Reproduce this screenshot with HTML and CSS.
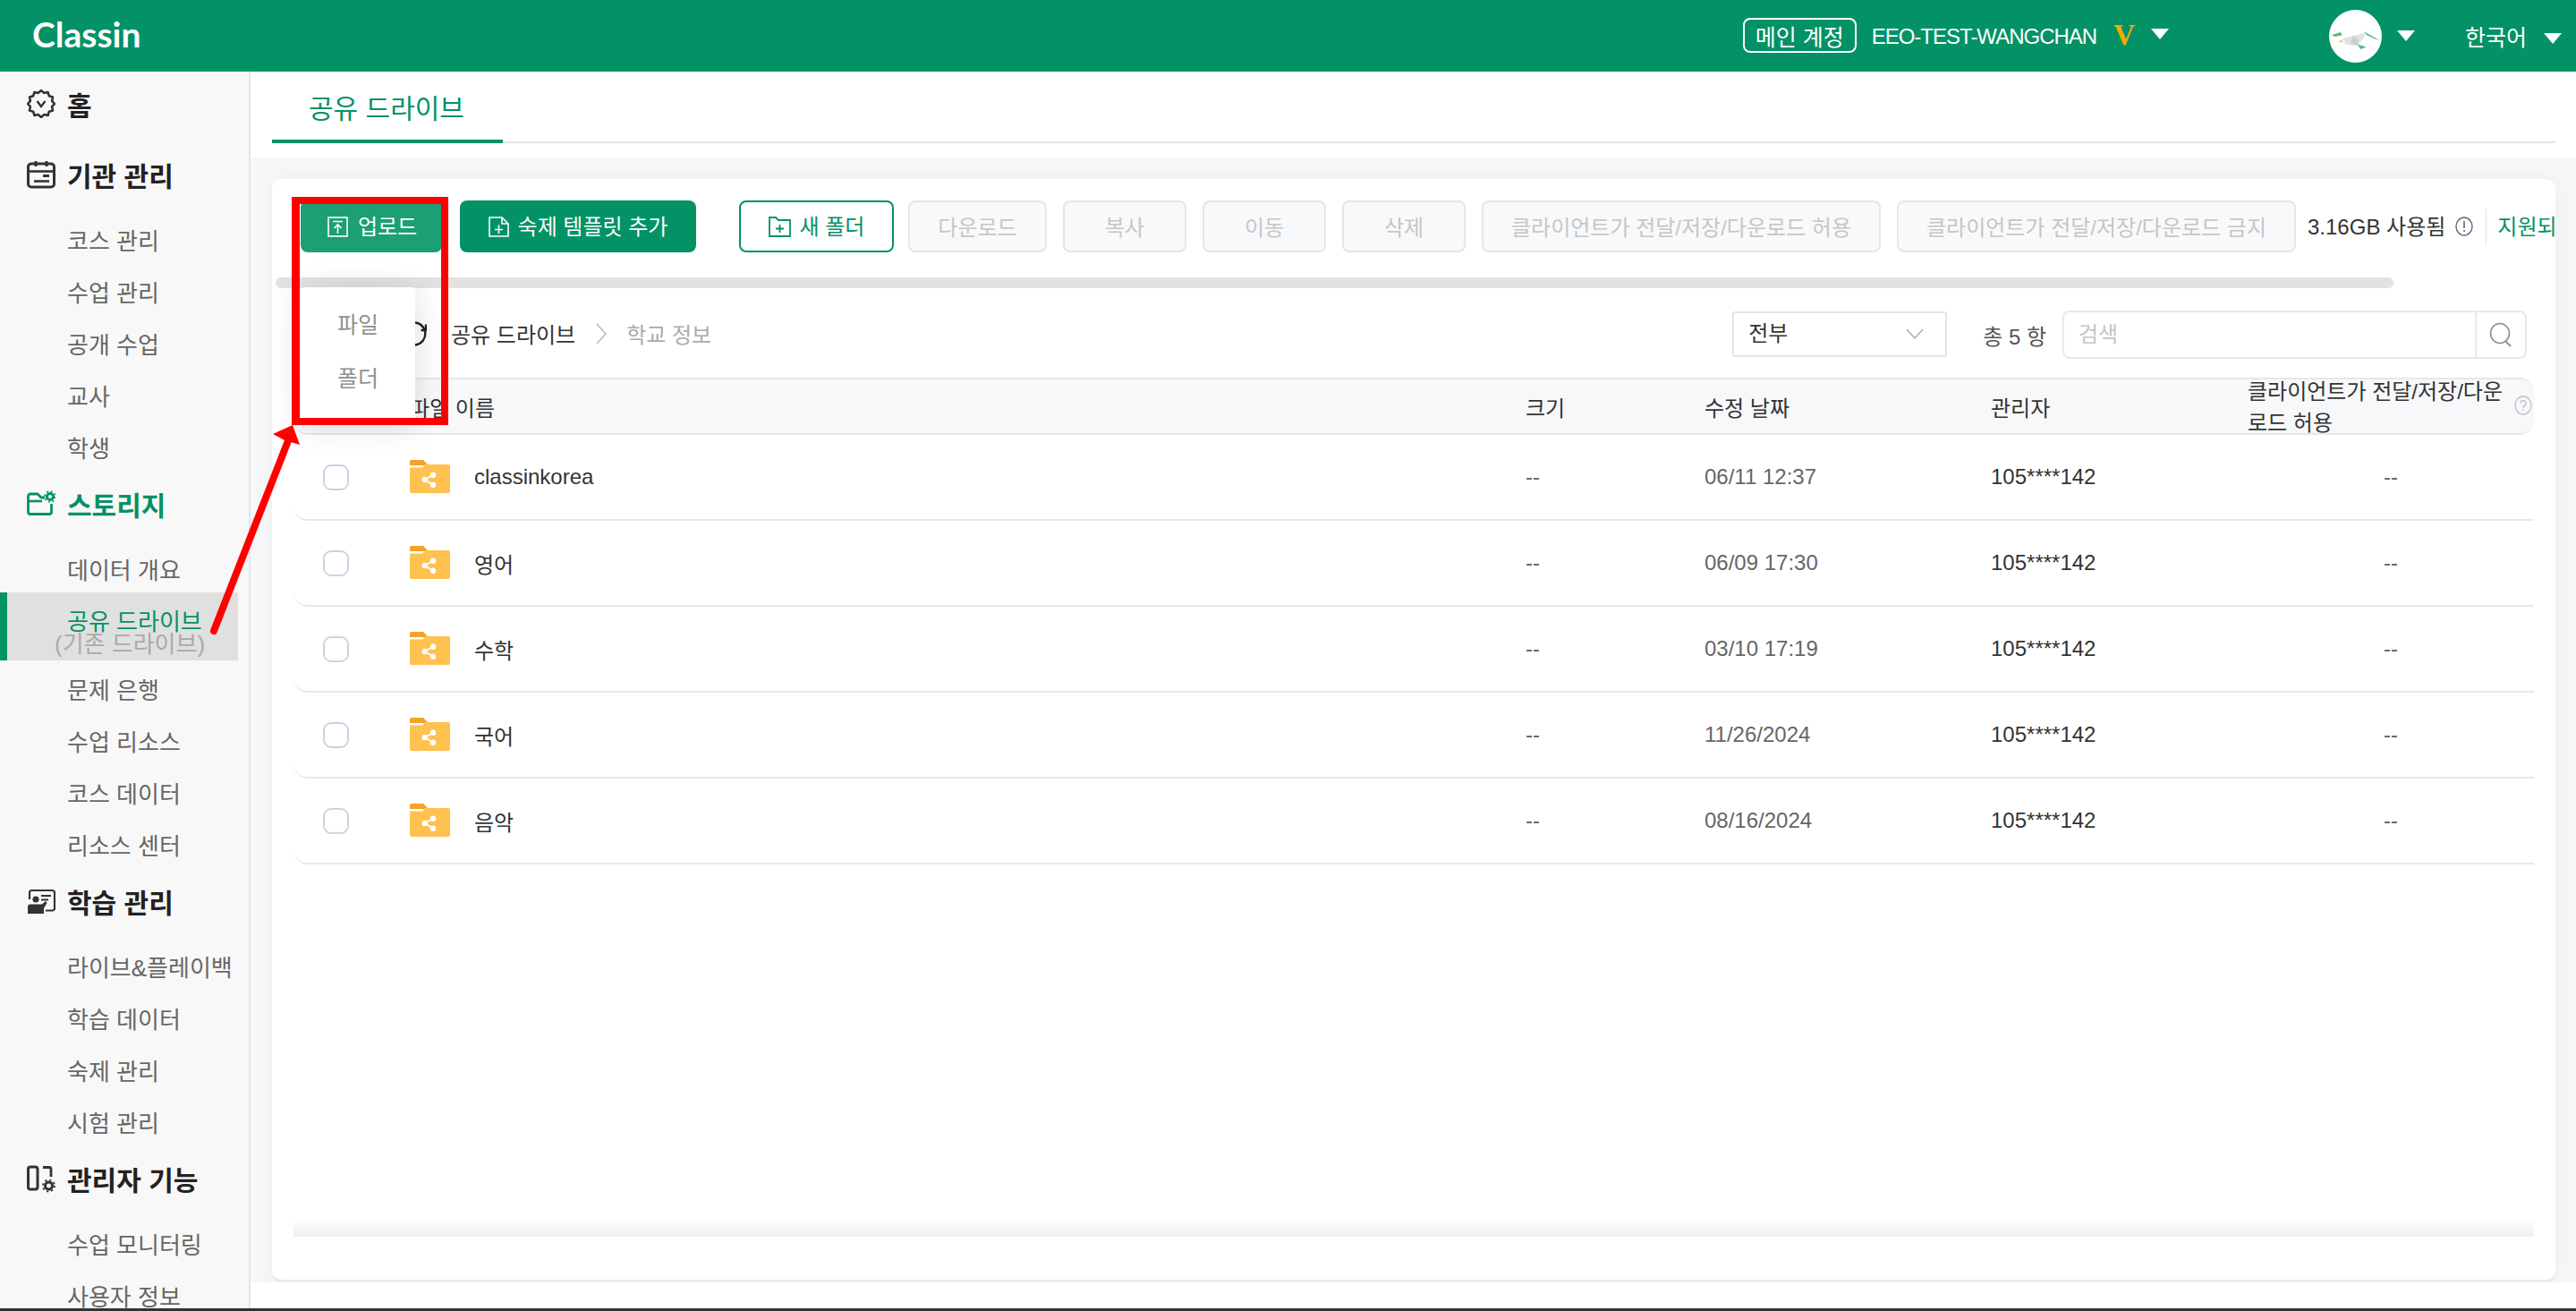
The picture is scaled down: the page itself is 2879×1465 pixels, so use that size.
FILE: index.html
```html
<!DOCTYPE html>
<html lang="ko">
<head>
<meta charset="utf-8">
<title>ClassIn</title>
<link rel="stylesheet" href="styles.css">
</head>
<body>
<div class="page">
  <header class="topbar">
    <div class="logo">Classin</div>
    <div class="badge">메인 계정</div>
    <div class="acct">EEO-TEST-WANGCHAN</div>
    <div class="vip">V</div>
    <i class="tri tri-a"></i>
    <svg class="avatar" viewBox="0 0 59 59">
      <circle cx="29.5" cy="29.5" r="29.5" fill="#fff"/>
      <path d="M15 32 L27 29 L40 25.5 L39 32 L31 40 L20 39 Z" fill="#dfe3e1"/>
      <path d="M27 29 L33 34 L31 40 L24 37 Z" fill="#c9cfcc"/>
      <path d="M15 32 L20 39 L13 36 Z" fill="#eef0ee"/>
      <path d="M2.7 28 L12.7 25 L15 28.3 L6.7 30 Z" fill="#5dbb7d"/>
      <path d="M39.3 24.3 L56.7 34.3 L50 32 L41.7 28 Z" fill="#5dbb7d"/>
      <path d="M31.7 38.3 L41.7 41.7 L35 44 Z" fill="#5dbb7d"/>
      <circle cx="13" cy="35" r="1.3" fill="#f2b33d"/>
    </svg>
    <i class="tri tri-b"></i>
    <div class="lang">한국어</div>
    <i class="tri tri-c"></i>
  </header>

  <div class="middle">
    <nav class="sidebar">
      <div class="nav-head nav-home">
        <svg class="nav-icon" viewBox="0 0 32 32"><path d="M31 16 28.1 19.2 29 23.5 24.8 24.8 23.5 29 19.2 28.1 16 31 12.8 28.1 8.5 29 7.2 24.8 3 23.5 3.9 19.2 1 16 3.9 12.8 3 8.5 7.2 7.2 8.5 3 12.8 3.9 16 1 19.2 3.9 23.5 3 24.8 7.2 29 8.5 28.1 12.8Z" fill="none" stroke="#333" stroke-width="2.6" stroke-linejoin="round"/><path d="M11.5 13 16 19 20.5 13" fill="none" stroke="#333" stroke-width="2.4"/></svg>
        <span>홈</span>
      </div>

      <div class="nav-head">
        <svg class="nav-icon" viewBox="0 0 32 32"><rect x="1.5" y="4" width="29" height="26" rx="3.5" fill="none" stroke="#333" stroke-width="3"/><path d="M10 1V7M22 1V7" stroke="#333" stroke-width="3"/><path d="M2 12.5H30" stroke="#333" stroke-width="2.6"/><path d="M18 17.5H25" stroke="#333" stroke-width="3"/><path d="M8 23.5H25" stroke="#333" stroke-width="2.6"/></svg>
        <span>기관 관리</span>
      </div>
      <a class="nav-item">코스 관리</a>
      <a class="nav-item">수업 관리</a>
      <a class="nav-item">공개 수업</a>
      <a class="nav-item">교사</a>
      <a class="nav-item">학생</a>

      <div class="nav-head nav-head-on">
        <svg class="nav-icon" viewBox="0 0 32 32"><path d="M20 9 H16 L12 5 H4 A2.5 2.5 0 0 0 1.5 7.5 V25 A2.5 2.5 0 0 0 4 27.5 H25 A2.5 2.5 0 0 0 27.5 25 V16" fill="none" stroke="#029266" stroke-width="2.8" stroke-linejoin="round"/><path d="M2 13 H17" stroke="#029266" stroke-width="2.6"/><circle cx="26" cy="8" r="3.6" fill="none" stroke="#029266" stroke-width="3"/><circle cx="26" cy="8" r="6" fill="none" stroke="#029266" stroke-width="1.6" stroke-dasharray="2 2.7"/></svg>
        <span>스토리지</span>
      </div>
      <a class="nav-item">데이터 개요</a>
      <a class="nav-item nav-item-on">
        <span class="on-main">공유 드라이브</span>
        <span class="on-sub">(기존 드라이브)</span>
      </a>
      <a class="nav-item">문제 은행</a>
      <a class="nav-item">수업 리소스</a>
      <a class="nav-item">코스 데이터</a>
      <a class="nav-item">리소스 센터</a>

      <div class="nav-head">
        <svg class="nav-icon" viewBox="0 0 32 32"><path d="M3 14V6.5A2.5 2.5 0 0 1 5.500 4H28.500A2.500 2.500 0 0 1 31 6.500V24A2.500 2.500 0 0 1 28.500 26.500H21" fill="none" stroke="#333" stroke-width="2.200"/><circle cx="10" cy="14" r="3.600" fill="#333"/><path d="M1 30V22.500A3 3 0 0 1 4 19.500H17L21 16 22.500 18 19 24V30Z" fill="#333"/><path d="M16 10H27M16 14.500H24" stroke="#333" stroke-width="2"/></svg>
        <span>학습 관리</span>
      </div>
      <a class="nav-item">라이브&amp;플레이백</a>
      <a class="nav-item">학습 데이터</a>
      <a class="nav-item">숙제 관리</a>
      <a class="nav-item">시험 관리</a>

      <div class="nav-head">
        <svg class="nav-icon" viewBox="0 0 32 32"><rect x="1.500" y="3" width="10.500" height="25" rx="2.500" fill="none" stroke="#333" stroke-width="3"/><path d="M18 3.500H25A2 2 0 0 1 27 5.500V14" fill="none" stroke="#333" stroke-width="2.800"/><circle cx="24.500" cy="24" r="4" fill="none" stroke="#333" stroke-width="3"/><circle cx="24.500" cy="24" r="6.500" fill="none" stroke="#333" stroke-width="1.800" stroke-dasharray="2.200 2.900"/></svg>
        <span>관리자 기능</span>
      </div>
      <a class="nav-item">수업 모니터링</a>
      <a class="nav-item">사용자 정보</a>
    </nav>

    <main class="main">
      <div class="tabstrip">
        <div class="tabs"><div class="tab">공유 드라이브</div></div>
      </div>
      <div class="content">
        <section class="card">
          <div class="toolbar">
            <button class="btn btn-upload">
              <svg class="btn-icon" viewBox="0 0 23 23"><rect x="1" y="1" width="21" height="21" fill="none" stroke="#fff" stroke-width="1.600"/><path d="M6 5.500H17M11.500 19V9M7.500 13 11.500 9 15.500 13" fill="none" stroke="#fff" stroke-width="1.600"/></svg>
              업로드
            </button>
            <button class="btn btn-solid">
              <svg class="btn-icon" viewBox="0 0 23 23"><path d="M1 1H15L22 8V22H1Z M15 1V8H22" fill="none" stroke="#fff" stroke-width="1.600"/><path d="M11.500 9.500V19M7 14.500H16" stroke="#fff" stroke-width="1.600"/></svg>
              숙제 템플릿 추가
            </button>
            <button class="btn btn-line">
              <svg class="btn-icon" viewBox="0 0 25 23"><path d="M1 1H8L11 4H24V22H1Z" fill="none" stroke="#029266" stroke-width="1.800"/><path d="M12.500 9V18M8 13.500H17" stroke="#029266" stroke-width="1.800"/></svg>
              새 폴더
            </button>
            <button class="btn btn-off w-down">다운로드</button>
            <button class="btn btn-off w-small">복사</button>
            <button class="btn btn-off w-small">이동</button>
            <button class="btn btn-off w-small">삭제</button>
            <button class="btn btn-off w-wide">클라이언트가 전달/저장/다운로드 허용</button>
            <button class="btn btn-off w-wide">클라이언트가 전달/저장/다운로드 금지</button>
            <span class="usage">3.16GB 사용됨</span>
            <svg class="info" viewBox="0 0 20 22"><ellipse cx="10" cy="11" rx="9" ry="10" fill="none" stroke="#5f6b7c" stroke-width="1.400"/><path d="M10 5V13M10 15V17" stroke="#5f6b7c" stroke-width="1.600"/></svg>
            <span class="sep"></span>
            <span class="support">지원되</span>
          </div>
          <div class="hscroll"></div>

          <div class="crumbs">
            <svg class="refresh" viewBox="0 0 28 28"><path d="M15 1.500A12.500 12.500 0 1 1 2 18" fill="none" stroke="#222" stroke-width="2.400"/><path d="M27 3.500V10H21.500" fill="none" stroke="#222" stroke-width="2.400"/></svg>
            <span class="crumb">공유 드라이브</span>
            <svg class="crumb-sep" viewBox="0 0 12 24"><path d="M1 1 11 12 1 23" fill="none" stroke="#b5b5b5" stroke-width="1.400"/></svg>
            <span class="crumb crumb-last">학교 정보</span>
            <div class="select">
              <span>전부</span>
              <svg class="select-arrow" viewBox="0 0 20 12"><path d="M1 1 10 11 19 1" fill="none" stroke="#a8a8a8" stroke-width="1.400"/></svg>
            </div>
            <span class="total">총 5 항</span>
            <div class="search">
              <input class="search-input" placeholder="검색">
              <span class="search-btn">
                <svg class="search-icon" viewBox="0 0 26 28"><ellipse cx="12" cy="12.500" rx="10.500" ry="11" fill="none" stroke="#8c8c8c" stroke-width="1.600"/><path d="M18 21 24 27" stroke="#8c8c8c" stroke-width="1.800"/></svg>
              </span>
            </div>
          </div>

          <div class="table">
            <div class="grid thead">
              <span></span>
              <span>파일 이름</span>
              <span>크기</span>
              <span>수정 날짜</span>
              <span>관리자</span>
              <span class="th-perm">
                <span class="th-perm-text">클라이언트가 전달/저장/다운로드 허용</span>
                <svg class="help" viewBox="0 0 20 22"><ellipse cx="10" cy="11" rx="9" ry="10" fill="none" stroke="#bfc3c9" stroke-width="1.400"/><path d="M7 8.500A3 3 0 1 1 11 11.500C10.300 12 10 12.500 10 14M10 15.500V17" fill="none" stroke="#bfc3c9" stroke-width="1.400"/></svg>
              </span>
            </div>

            <div class="grid row">
              <span class="check"></span>
              <span class="name"><svg class="folder" viewBox="0 0 45 37"><use href="#shared-folder"/></svg>classinkorea</span>
              <span class="dim">--</span><span class="dim">06/11 12:37</span><span>105****142</span><span class="dim perm">--</span>
            </div>
            <div class="grid row">
              <span class="check"></span>
              <span class="name"><svg class="folder" viewBox="0 0 45 37"><use href="#shared-folder"/></svg>영어</span>
              <span class="dim">--</span><span class="dim">06/09 17:30</span><span>105****142</span><span class="dim perm">--</span>
            </div>
            <div class="grid row">
              <span class="check"></span>
              <span class="name"><svg class="folder" viewBox="0 0 45 37"><use href="#shared-folder"/></svg>수학</span>
              <span class="dim">--</span><span class="dim">03/10 17:19</span><span>105****142</span><span class="dim perm">--</span>
            </div>
            <div class="grid row">
              <span class="check"></span>
              <span class="name"><svg class="folder" viewBox="0 0 45 37"><use href="#shared-folder"/></svg>국어</span>
              <span class="dim">--</span><span class="dim">11/26/2024</span><span>105****142</span><span class="dim perm">--</span>
            </div>
            <div class="grid row">
              <span class="check"></span>
              <span class="name"><svg class="folder" viewBox="0 0 45 37"><use href="#shared-folder"/></svg>음악</span>
              <span class="dim">--</span><span class="dim">08/16/2024</span><span>105****142</span><span class="dim perm">--</span>
            </div>
          </div>
          <div class="table-fade"></div>

          <div class="menu">
            <div class="menu-item">파일</div>
            <div class="menu-item">폴더</div>
          </div>
        </section>
      </div>
      <div class="under"></div>
    </main>
  </div>
  <div class="edge"></div>

  <div class="mark-box"></div>
  <svg class="mark-arrow" viewBox="0 0 120 250">
    <path d="M9 240 93 25" stroke="#f00" stroke-width="8" stroke-linecap="round"/>
    <path d="M97 10 75 20 88 27 105 32Z" fill="#f00"/>
  </svg>
</div>

<svg class="defs" width="0" height="0">
  <defs>
    <g id="shared-folder">
      <path d="M0 2A2 2 0 0 1 2 0H15L20 5V12H0Z" fill="#f5a228"/>
      <path d="M0 6.500H15.500L17 5H43A2 2 0 0 1 45 7V35A2 2 0 0 1 43 37H2A2 2 0 0 1 0 35Z" fill="#ffc14f"/>
      <path d="M0 6H16L14.500 8.500H0Z" fill="#fff"/>
      <path d="M26 16.700 16.700 22 26 27.700" fill="none" stroke="#fff" stroke-width="1.800"/>
      <circle cx="26" cy="16.700" r="3.200" fill="#fff"/>
      <circle cx="16.700" cy="22" r="3.200" fill="#fff"/>
      <circle cx="26" cy="27.700" r="3.200" fill="#fff"/>
    </g>
  </defs>
</svg>
</body>
</html>
```
FILE: styles.css
```css
* { box-sizing: border-box; }
html, body { margin: 0; height: 100%; overflow: hidden; }
body {
  font-family: "Liberation Sans", "Noto Sans CJK KR", sans-serif;
  font-size: 24px;
  color: #333;
  background: #fff;
}
.page { position: relative; height: 100vh; display: flex; flex-direction: column; }
.defs { position: absolute; }

/* top bar */
.topbar {
  flex: 0 0 80px;
  background: #029266;
  color: #fff;
  display: flex;
  align-items: center;
  padding: 0 16px 0 36px;
}
.logo { font-family: Lato, sans-serif; font-size: 39px; font-weight: 700; margin-top: -4px; }
.badge {
  margin-left: auto;
  height: 39px;
  width: 127px;
  margin-top: -1px;
  border: 2px solid #fff;
  border-radius: 8px;
  font-size: 25px;
  display: flex;
  align-items: center;
  justify-content: center;
  white-space: nowrap;
}
.acct { margin-left: 17px; font-size: 24px; letter-spacing: -1px; margin-top: 2px; }
.vip { margin-left: 19px; font-family: "Liberation Serif", serif; font-weight: 700; font-size: 33px; color: #f2a900; margin-top: -2px; }
.tri { display: block; width: 0; height: 0; border-left: 10px solid transparent; border-right: 10px solid transparent; border-top: 12px solid #fff; }
.tri-a { margin-left: 18px; margin-top: -5px; }
.avatar { width: 59px; height: 59px; margin-left: 179px; }
.tri-b { margin-left: 17px; margin-top: -1px; }
.lang { margin-left: 56px; font-size: 25px; }
.tri-c { margin-left: 19px; margin-top: 6px; }

/* body */
.middle { flex: 1; min-height: 0; display: flex; }

/* sidebar */
.sidebar {
  flex: 0 0 280px;
  background: #f8f8f8;
  border-right: 2px solid #e6e6e6;
  padding-top: 1px;
  overflow: hidden;
}
.nav-head {
  height: 70px;
  margin-bottom: 8px;
  padding-left: 30px;
  display: flex;
  align-items: center;
  gap: 13px;
  font-size: 30px;
  font-weight: 700;
  color: #222;
  white-space: nowrap;
}
.nav-home { margin-bottom: 9px; }
.nav-head-on { color: #029266; }
.nav-icon { width: 32px; height: 32px; flex: none; }
.nav-item {
  display: flex;
  align-items: center;
  height: 58px;
  padding-left: 75px;
  font-size: 26px;
  color: #666;
  white-space: nowrap;
}
.nav-item-on {
  flex-direction: column;
  align-items: flex-start;
  justify-content: flex-start;
  height: 76px;
  width: 266px;
  margin: -2px 0 2px;
  padding: 20px 0 0 67px;
  border-left: 8px solid #029266;
  background: #e0e0e0;
}
.on-main { color: #029266; line-height: 26px; }
.on-sub { color: #aaa; line-height: 25px; margin-left: -14px; }

/* main */
.main { flex: 1; min-width: 0; display: flex; flex-direction: column; }
.tabstrip { flex: 0 0 96px; padding: 0 23px 16px 24px; }
.tabs { height: 80px; border-bottom: 2px solid #e4e7ed; display: flex; }
.tab {
  width: 258px;
  height: 80px;
  padding: 22px 0 0 41px;
  border-bottom: 4px solid #029266;
  color: #029266;
  font-size: 30px;
  line-height: 40px;
  white-space: nowrap;
}
.content {
  flex: 1;
  min-height: 0;
  background: #f6f7f9;
  padding: 24px 23px 3px 24px;
  overflow: hidden;
}
.under { flex: 0 0 29px; }
.edge { flex: 0 0 3px; background: #333; }

.card {
  position: relative;
  height: 100%;
  background: #fff;
  border-radius: 10px;
  box-shadow: 0 3px 0 #e9eaec, 0 0 20px rgba(0, 0, 0, .05);
  display: flex;
  flex-direction: column;
  padding-top: 24px;
}

/* toolbar */
.toolbar {
  flex: none;
  height: 58px;
  margin-left: 32px;
  display: flex;
  align-items: center;
  overflow: hidden;
  white-space: nowrap;
}
.btn {
  flex: none;
  height: 58px;
  border-radius: 8px;
  border: 0;
  padding: 0 0 3px;
  font: inherit;
  display: flex;
  align-items: center;
  justify-content: center;
  gap: 11px;
}
.btn-icon { width: 23px; height: 23px; flex: none; margin-top: 3px; }
.btn-upload { width: 158px; margin-right: 20px; padding-left: 2px; background: #1c9f74; color: #fff; }
.btn-solid { width: 264px; margin-right: 48px; background: #029266; color: #fff; gap: 10px; }
.btn-line { width: 173px; margin-right: 16px; background: #fff; color: #029266; border: 2px solid #029266; gap: 10px; }
.btn-line .btn-icon { width: 25px; }
.btn-off { margin-right: 18px; background: #f8f9fb; color: #c6c6c6; border: 2px solid #e6e6e6; padding: 0 0 2px; }
.w-down { width: 155px; }
.w-small { width: 138px; }
.w-wide { width: 446px; }
.btn-off.w-wide:nth-of-type(9) { margin-right: 13px; }
.usage { flex: none; margin-top: -4px; }
.info { flex: none; width: 20px; height: 22px; margin-left: 11px; }
.sep { flex: none; width: 1px; height: 40px; background: #dcdfe6; margin: 0 12px 0 14px; }
.support { color: #029266; flex: none; margin-top: -4px; }

.hscroll {
  flex: none;
  width: 2367px;
  height: 12px;
  margin: 28px 0 0 4px;
  border-radius: 6px;
  background: #e2e2e2;
}

/* breadcrumb row */
.crumbs {
  flex: none;
  height: 100px;
  margin: 0 32px 0 145px;
  display: flex;
  align-items: center;
}
.refresh { width: 28px; height: 28px; flex: none; margin-top: 2px; }
.crumb { margin-left: 27px; white-space: nowrap; }
.crumb-sep { width: 12px; height: 24px; flex: none; margin: 2px 0 0 23px; }
.crumb-last { margin-left: 22px; color: #aaa; }
.select {
  margin-left: auto;
  width: 240px;
  height: 51px;
  margin-top: 2px;
  border: 2px solid #e4e4e4;
  border-radius: 3px;
  padding: 0 16px;
  display: flex;
  align-items: center;
  justify-content: space-between;
}
.select span { margin-top: -6px; }
.select-arrow { width: 20px; height: 12px; margin-right: 8px; }
.total { margin: 4px 18px 0 40px; white-space: nowrap; color: #555; }
.search {
  width: 519px;
  height: 54px;
  margin-top: 4px;
  border: 2px solid #e8e8e8;
  border-radius: 8px;
  display: flex;
}
.search-input {
  flex: 1;
  min-width: 0;
  border: 0;
  outline: 0;
  padding: 0 16px;
  font: inherit;
  background: transparent;
  border-radius: 8px;
}
.search-input::placeholder { color: #c2c5cb; }
.search-btn {
  flex: 0 0 56px;
  border-left: 2px solid #e8e8e8;
  display: flex;
  align-items: center;
  justify-content: center;
}
.search-icon { width: 26px; height: 28px; }

/* table */
.table { flex: 1; min-height: 0; margin: 0 24px; }
.table-fade {
  flex: none;
  height: 19px;
  margin: 0 24px 48px;
  background: linear-gradient(rgba(238, 238, 238, 0), #eee);
}
.grid {
  display: grid;
  grid-template-columns: 130px 1247px 200px 320px 287px 1fr;
  grid-template-rows: 100%;
  align-items: center;
}
.thead {
  height: 64px;
  background: #f7f8fa;
  border: solid #e8e8e8;
  border-width: 2px 0;
  border-radius: 16px;
  white-space: nowrap;
}
.th-perm { display: flex; align-items: center; justify-content: space-between; padding-right: 2px; white-space: normal; }
.th-perm-text { width: 292px; line-height: 35px; word-break: break-all; margin-top: 2px; }
.help { width: 20px; height: 22px; flex: none; margin-top: -2px; }
.row { height: 96px; border-bottom: 2px solid #e8e8e8; border-radius: 0 0 0 16px; }
.check { width: 29px; height: 29px; margin-left: 33px; border: 2px solid #cdd4e2; border-radius: 9px; background: #fff; }
.name { display: flex; align-items: center; gap: 27px; }
.folder { width: 45px; height: 37px; flex: none; margin-top: -2px; }
.dim { color: #666; }
.perm { padding-left: 152px; }

/* overlay menu and annotations */
.menu {
  position: absolute;
  left: 32px;
  top: 121px;
  width: 128px;
  height: 149px;
  padding-top: 10px;
  background: #fff;
  border-radius: 4px;
  box-shadow: 0 4px 36px rgba(0, 0, 0, .14);
}
.menu-item { height: 60px; display: flex; align-items: center; justify-content: center; color: #909090; font-size: 25px; }
.mark-box {
  position: absolute;
  left: 326px;
  top: 220px;
  width: 175px;
  height: 255px;
  border: 8px solid #f00;
  border-left-width: 9px;
}
.mark-arrow {
  position: absolute;
  left: 230px;
  top: 465px;
  width: 120px;
  height: 250px;
}
```
